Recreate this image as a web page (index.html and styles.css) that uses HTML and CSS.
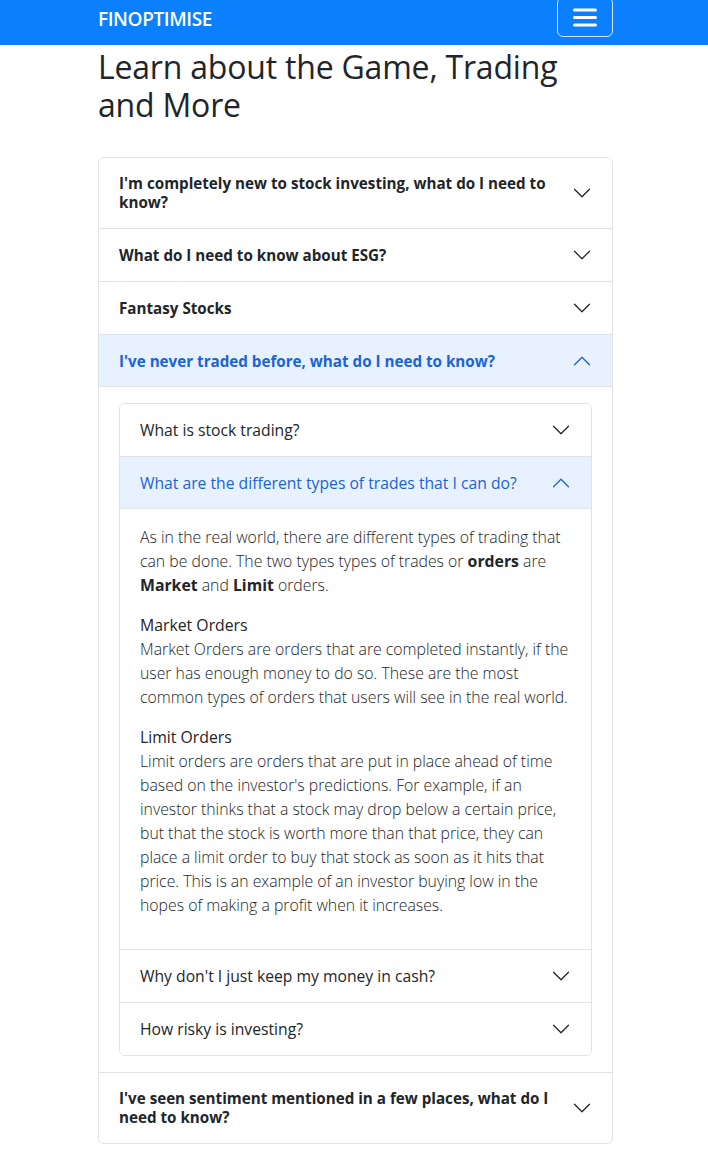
FILE: index.html
```html
<!DOCTYPE html>
<html lang="en">
<head>
<meta charset="utf-8">
<title>FinOptimise - Learn</title>
<link rel="stylesheet" href="styles.css">
</head>
<body>
<nav class="navbar">
  <div class="container nav-inner">
    <a class="brand" href="#">FINOPTIMISE</a>
    <button class="toggler" type="button" aria-label="Toggle navigation">
      <svg width="30" height="30" viewBox="0 0 30 30" aria-hidden="true">
        <path d="M4.5 8h21M4.5 15.5h21M4.5 23h21" stroke="#fff" stroke-width="3" stroke-linecap="round" fill="none"/>
      </svg>
    </button>
  </div>
</nav>

<main class="container">
  <h1 class="title">Learn about the Game, Trading and More</h1>

  <div class="accordion outer">
    <div class="acc-item">
      <button class="acc-btn" type="button"><span>I'm completely new to stock investing, what do I need to know?</span><span class="chev"></span></button>
    </div>
    <div class="acc-item">
      <button class="acc-btn" type="button"><span>What do I need to know about ESG?</span><span class="chev"></span></button>
    </div>
    <div class="acc-item">
      <button class="acc-btn" type="button"><span>Fantasy Stocks</span><span class="chev"></span></button>
    </div>
    <div class="acc-item">
      <button class="acc-btn open" type="button"><span>I've never traded before, what do I need to know?</span><span class="chev"></span></button>
      <div class="acc-body">
        <div class="accordion inner">
          <div class="acc-item">
            <button class="acc-btn" type="button"><span>What is stock trading?</span><span class="chev"></span></button>
          </div>
          <div class="acc-item">
            <button class="acc-btn open" type="button"><span>What are the different types of trades that I can do?</span><span class="chev"></span></button>
            <div class="acc-body text">
              <p>As in the real world, there are different types of trading that can be done. The two types types of trades or <b>orders</b> are <b>Market</b> and <b>Limit</b> orders.</p>
              <p><span class="sub">Market Orders</span><br>Market Orders are orders that are completed instantly, if the user has enough money to do so. These are the most common types of orders that users will see in the real world.</p>
              <p><span class="sub">Limit Orders</span><br>Limit orders are orders that are put in place ahead of time based on the investor's predictions. For example, if an investor thinks that a stock may drop below a certain price, but that the stock is worth more than that price, they can place a limit order to buy that stock as soon as it hits that price. This is an example of an investor buying low in the hopes of making a profit when it increases.</p>
            </div>
          </div>
          <div class="acc-item">
            <button class="acc-btn" type="button"><span>Why don't I just keep my money in cash?</span><span class="chev"></span></button>
          </div>
          <div class="acc-item">
            <button class="acc-btn" type="button"><span>How risky is investing?</span><span class="chev"></span></button>
          </div>
        </div>
      </div>
    </div>
    <div class="acc-item">
      <button class="acc-btn" type="button"><span>I've seen sentiment mentioned in a few places, what do I need to know?</span><span class="chev"></span></button>
    </div>
  </div>
</main>
</body>
</html>
```

FILE: styles.css
```css
* { box-sizing: border-box; }

html, body {
  margin: 0;
  padding: 0;
  background: #fff;
  color: #212529;
  font-family: "Open Sans", "Noto Sans", sans-serif;
}

.container {
  width: 540px;
  margin: 0 auto;
  padding: 0 11px 0 14px;
}

.navbar {
  height: 45px;
  background: #0a80ff;
  overflow: hidden;
}

.nav-inner {
  height: 34px;
  display: flex;
  align-items: center;
  justify-content: space-between;
}

.brand {
  color: #fff;
  text-decoration: none;
  font-size: 19px;
  font-weight: 600;
  letter-spacing: -0.4px;
  margin-top: 4px;
}

.toggler {
  width: 56px;
  height: 40px;
  flex-shrink: 0;
  display: flex;
  align-items: center;
  justify-content: center;
  background: transparent;
  border: 1px solid rgba(255, 255, 255, 0.8);
  border-radius: 6px;
  padding: 0;
}

.title {
  font-size: 32px;
  font-weight: 500;
  line-height: 38px;
  margin: 3px 0 33px;
  letter-spacing: -0.2px;
}

.accordion {
  border: 1px solid #dfe2e6;
  border-radius: 6px;
  overflow: hidden;
  margin-bottom: 10px;
}

.acc-item + .acc-item {
  border-top: 1px solid #dfe2e6;
}

.acc-btn {
  width: 100%;
  display: flex;
  align-items: center;
  gap: 12px;
  text-align: left;
  background: #fff;
  border: 0;
  margin: 0;
  padding: 16px 20px;
  font-family: inherit;
  color: #212529;
}

.outer > .acc-item > .acc-btn {
  font-size: 15.2px;
  font-weight: 700;
  line-height: 19px;
}

.inner .acc-btn {
  font-size: 15.7px;
  font-weight: 400;
  line-height: 20px;
}

.acc-btn > span:first-child {
  flex: 1;
}

.chev {
  width: 20px;
  height: 20px;
  flex-shrink: 0;
  background-repeat: no-repeat;
  background-size: 20px;
  background-image: url("data:image/svg+xml,%3csvg xmlns='http://www.w3.org/2000/svg' viewBox='0 0 16 16' fill='none' stroke='%23212529' stroke-linecap='round' stroke-linejoin='round'%3e%3cpath d='M2 5L8 11L14 5'/%3e%3c/svg%3e");
}

.acc-btn.open {
  background: #e7f1ff;
  color: #1c63d4;
  box-shadow: inset 0 -1px 0 #dfe2e6;
}

.acc-btn.open .chev {
  transform: rotate(180deg);
  background-image: url("data:image/svg+xml,%3csvg xmlns='http://www.w3.org/2000/svg' viewBox='0 0 16 16' fill='none' stroke='%231c63d4' stroke-linecap='round' stroke-linejoin='round'%3e%3cpath d='M2 5L8 11L14 5'/%3e%3c/svg%3e");
}

.acc-body {
  padding: 16px 20px;
}

.outer .acc-body > .accordion {
  margin-bottom: 0;
}

.text {
  font-size: 15.8px;
  font-weight: 300;
  line-height: 24px;
  color: #212529;
}

.text p {
  margin: 0 0 16px;
}

.text b {
  font-weight: 700;
}

.sub {
  font-weight: 400;
}
```
